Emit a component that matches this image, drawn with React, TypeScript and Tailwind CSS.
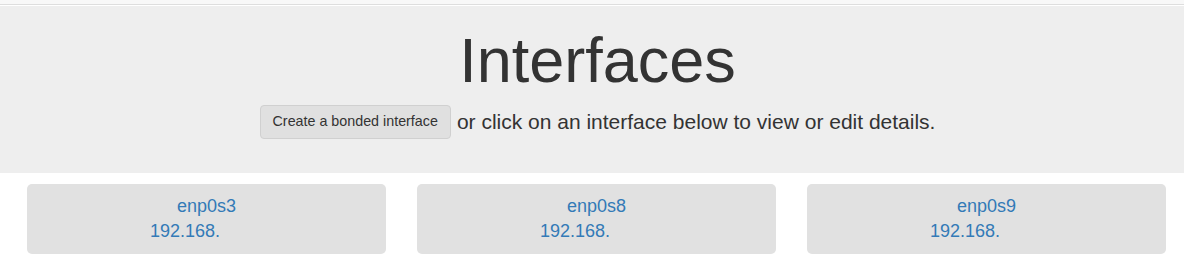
const interfaces = [
  { name: 'enp0s3', ip: '192.168.' },
  { name: 'enp0s8', ip: '192.168.' },
  { name: 'enp0s9', ip: '192.168.' },
];

export default function App() {
  return (
    <div className="min-h-[265px] bg-white text-[#333]" style={{ fontFamily: '"Liberation Sans", Arial, sans-serif' }}>
      {/* navbar edge */}
      <div className="h-[5px] bg-[#f8f8f8] border-b border-[#dedede]" />
      <div className="h-px bg-white" />

      {/* jumbotron */}
      <div className="bg-[#eeeeee] pt-[20px] pb-[34px] pl-[11px] text-center">
        <h1 className="text-[63px] leading-[69px] text-[#333]">Interfaces</h1>
        <div className="mt-[10px] flex items-center justify-center gap-[6px] h-[34px]">
          <button className="h-[34px] px-[12px] text-[14.3px] text-[#333] bg-[#e0e0e0] border border-[#d0d0d0] rounded-[4px]">
            Create a bonded interface
          </button>
          <span className="text-[21px] leading-[30px]">
            or click on an interface below to view or edit details.
          </span>
        </div>
      </div>

      {/* interface cards */}
      <div className="pt-[11px] pl-[27px] grid grid-cols-[359px_359px_359px] gap-[31px]">
        {interfaces.map((it) => (
          <div
            key={it.name}
            className="h-[70px] bg-[#e1e1e1] rounded-[5px] pt-[10px] text-[18px] leading-[25px] text-[#337ab7]"
          >
            <div className="text-center">{it.name}</div>
            <div className="pl-[123px]">{it.ip}</div>
          </div>
        ))}
      </div>
    </div>
  );
}
